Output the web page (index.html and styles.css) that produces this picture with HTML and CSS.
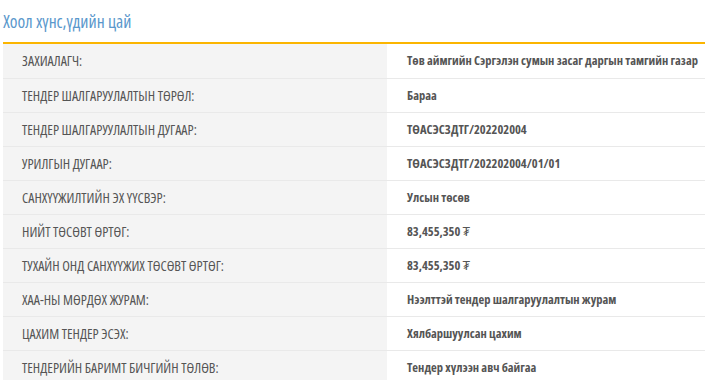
FILE: index.html
```html
<!DOCTYPE html>
<html lang="mn">
<head>
<meta charset="utf-8">
<link rel="stylesheet" href="styles.css">
</head>
<body>
<div class="page">
  <h2 class="title">Хоол хүнс,үдийн цай</h2>
  <table class="info">
    <tr><td class="label">ЗАХИАЛАГЧ:</td><td class="value">Төв аймгийн Сэргэлэн сумын засаг даргын тамгийн газар</td></tr>
    <tr><td class="label">ТЕНДЕР ШАЛГАРУУЛАЛТЫН ТӨРӨЛ:</td><td class="value">Бараа</td></tr>
    <tr><td class="label">ТЕНДЕР ШАЛГАРУУЛАЛТЫН ДУГААР:</td><td class="value">ТӨАСЭСЗДТГ/202202004</td></tr>
    <tr><td class="label">УРИЛГЫН ДУГААР:</td><td class="value">ТӨАСЭСЗДТГ/202202004/01/01</td></tr>
    <tr><td class="label">САНХҮҮЖИЛТИЙН ЭХ ҮҮСВЭР:</td><td class="value">Улсын төсөв</td></tr>
    <tr><td class="label">НИЙТ ТӨСӨВТ ӨРТӨГ:</td><td class="value">83,455,350 <span class="cur">₮</span></td></tr>
    <tr><td class="label">ТУХАЙН ОНД САНХҮҮЖИХ ТӨСӨВТ ӨРТӨГ:</td><td class="value">83,455,350 <span class="cur">₮</span></td></tr>
    <tr><td class="label">ХАА-НЫ МӨРДӨХ ЖУРАМ:</td><td class="value">Нээлттэй тендер шалгаруулалтын журам</td></tr>
    <tr><td class="label">ЦАХИМ ТЕНДЕР ЭСЭХ:</td><td class="value">Хялбаршуулсан цахим</td></tr>
    <tr><td class="label">ТЕНДЕРИЙН БАРИМТ БИЧГИЙН ТӨЛӨВ:</td><td class="value">Тендер хүлээн авч байгаа</td></tr>
  </table>
</div>
</body>
</html>
```
FILE: styles.css
```css
html, body {
  margin: 0;
  padding: 0;
  background: #ffffff;
}
body {
  font-family: "Open Sans", "Roboto Condensed", sans-serif;
  font-stretch: 75%;
  color: #555555;
}
.page {
  padding: 0 0 0 3px;
}
.title {
  margin: 0;
  padding: 10px 0 0 0;
  height: 44px;
  box-sizing: border-box;
  font-size: 17.5px;
  font-stretch: 85%;
  font-weight: normal;
  color: #5a98cc;
  border-bottom: 2px solid #fbb500;
  line-height: 22px;
}
.info {
  width: 100%;
  border-collapse: collapse;
  font-size: 12.5px;
}
.info td {
  height: 34px;
  padding: 0 0 0 20px;
  border-bottom: 1px solid #e9e9e9;
  box-sizing: border-box;
}
.info .label {
  width: 384px;
  background: #f4f4f4;
  padding-left: 19px;
  font-size: 14px;
  font-stretch: 85%;
}
.info .value {
  font-weight: bold;
  color: #555555;
}
.cur {
  font-weight: normal;
}
```
